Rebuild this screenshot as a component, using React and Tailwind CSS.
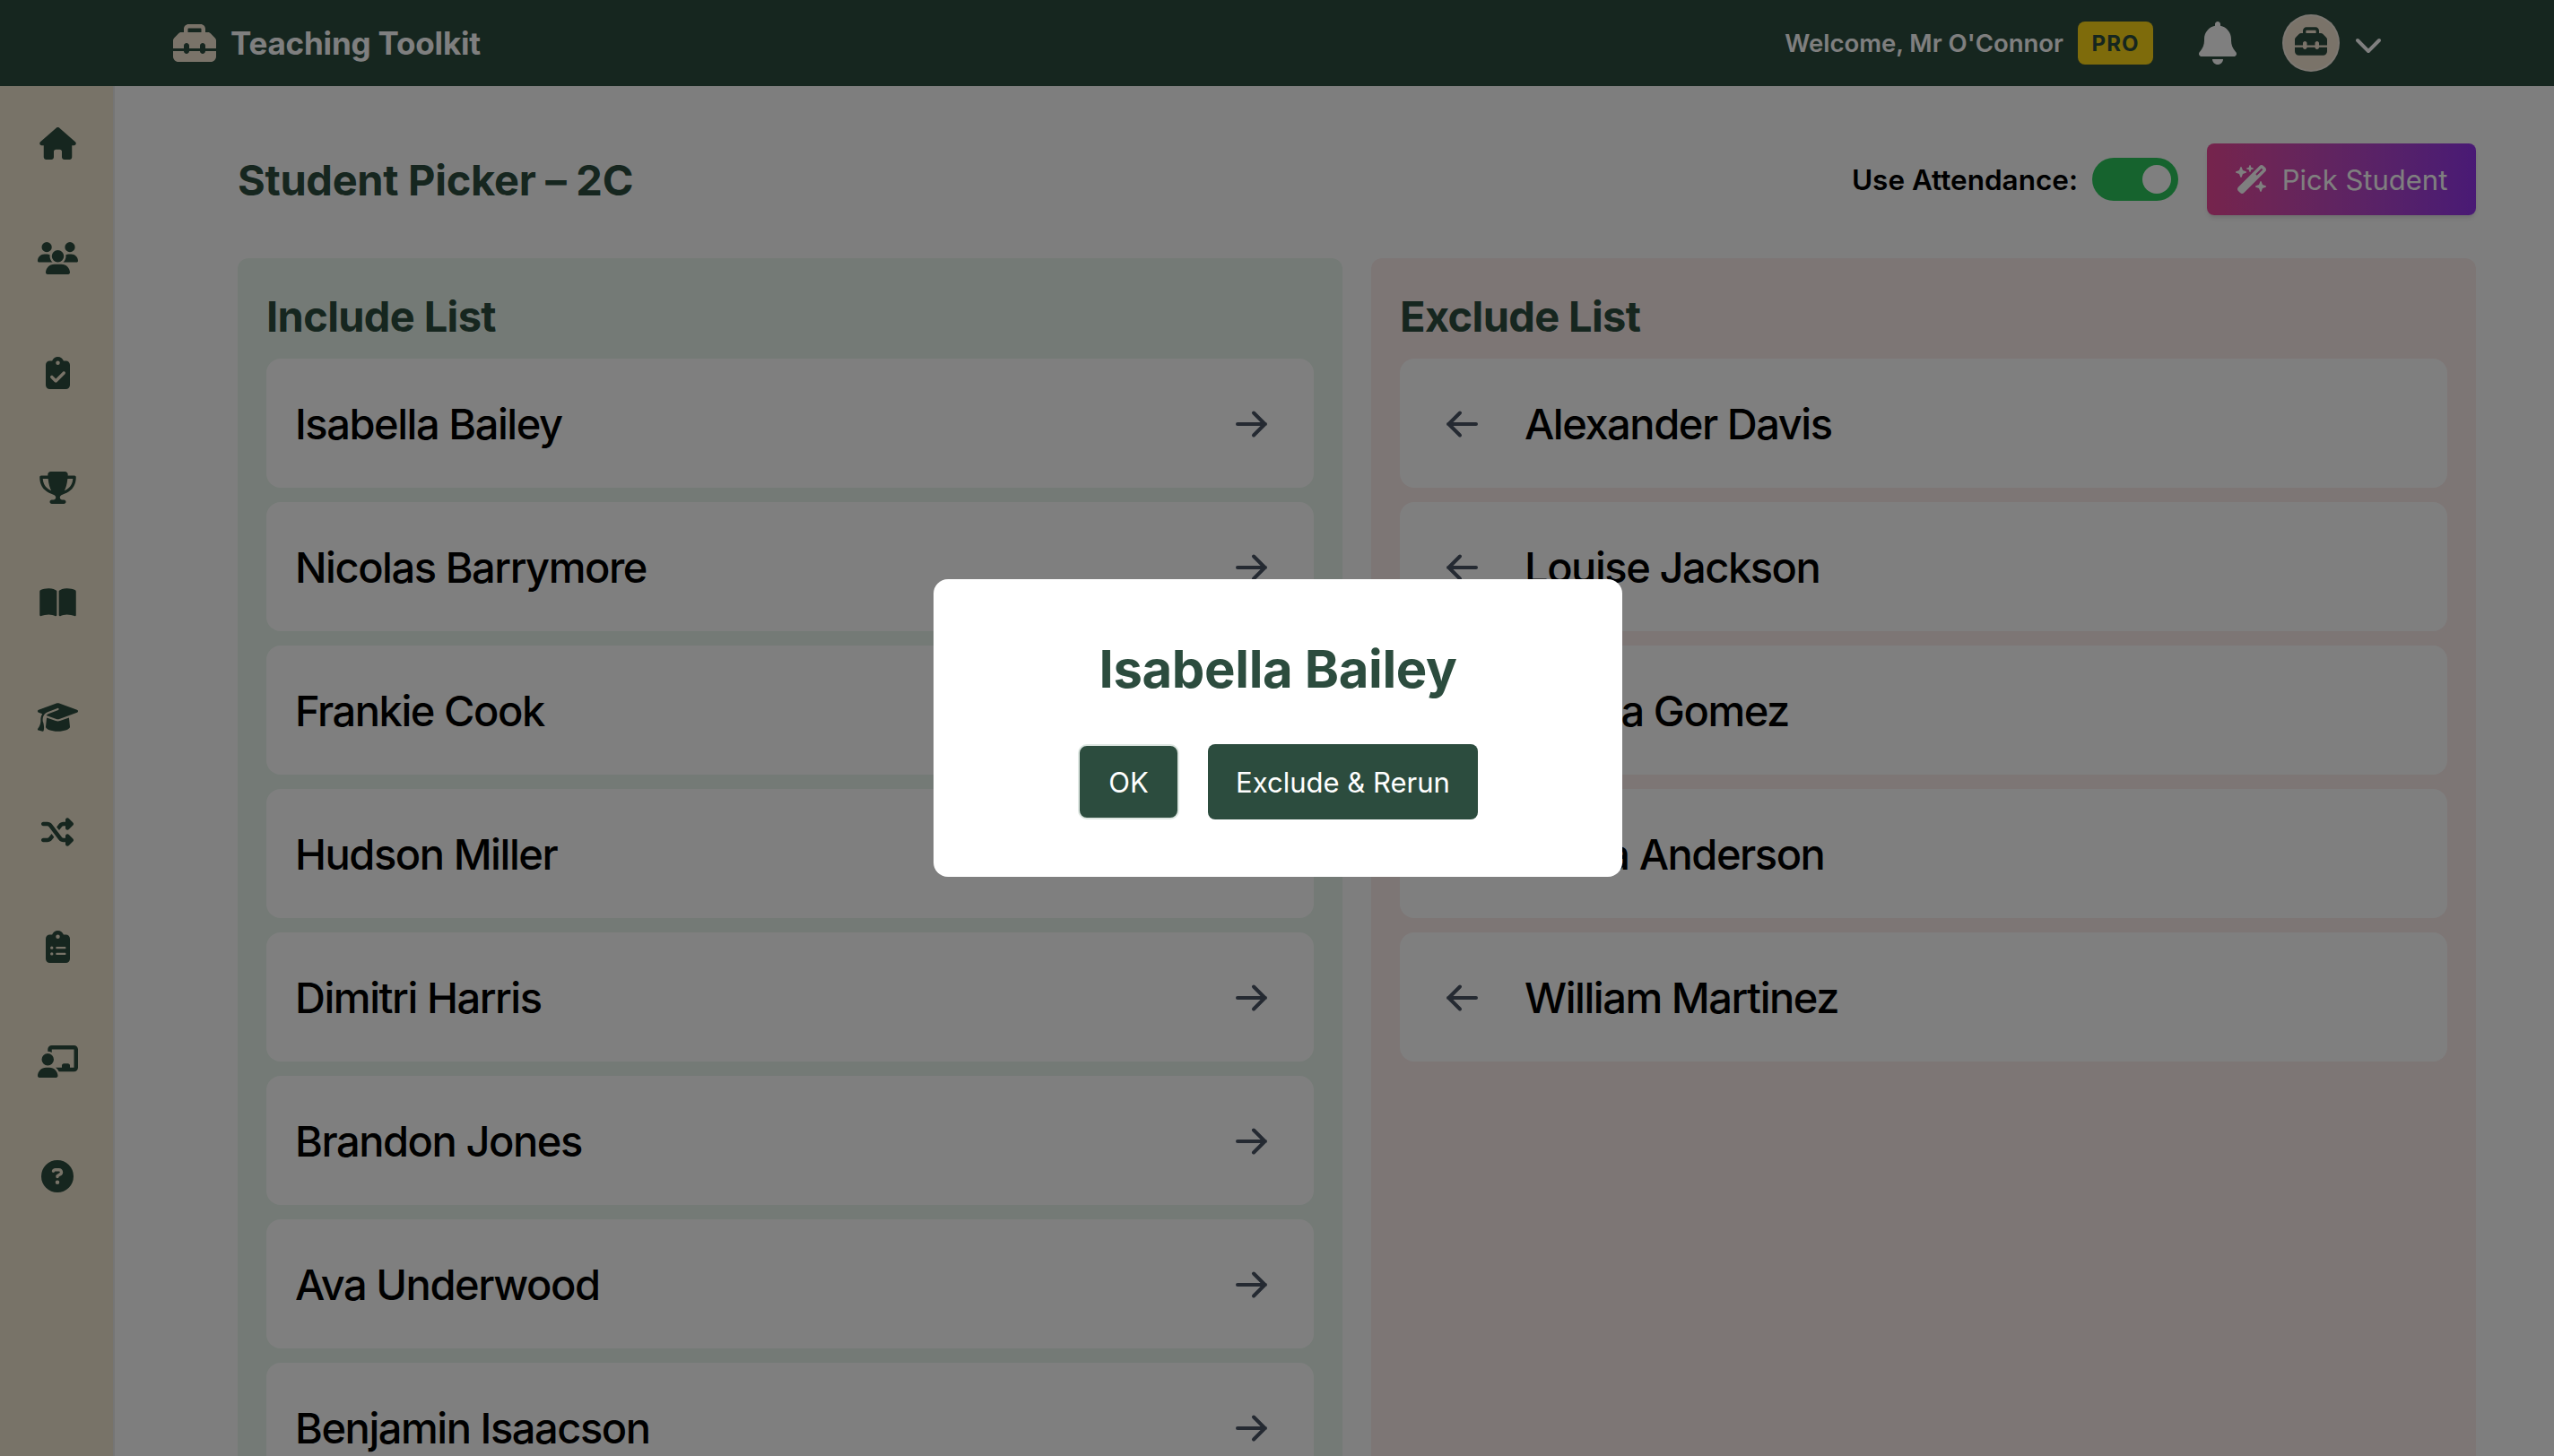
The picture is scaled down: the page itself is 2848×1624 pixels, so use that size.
import { useState } from 'react';
import {
  FaBell,
  FaBookOpen,
  FaChalkboardUser,
  FaChevronDown,
  FaCircleQuestion,
  FaClipboardCheck,
  FaClipboardList,
  FaGraduationCap,
  FaHouse,
  FaShuffle,
  FaToolbox,
  FaTrophy,
  FaUsers,
  FaWandMagicSparkles,
} from 'react-icons/fa6';

// the icons are not square, so each one carries its own width
const NAV_ITEMS = [
  { label: 'Home', icon: FaHouse, width: 'w-[41px]' },
  { label: 'Classes', icon: FaUsers, width: 'w-[45px]' },
  { label: 'Attendance', icon: FaClipboardCheck, width: 'w-[27px]' },
  { label: 'Awards', icon: FaTrophy, width: 'w-[41px]' },
  { label: 'Lessons', icon: FaBookOpen, width: 'w-[41px]' },
  { label: 'Grades', icon: FaGraduationCap, width: 'w-[45px]' },
  { label: 'Student Picker', icon: FaShuffle, width: 'w-9' },
  { label: 'Checklists', icon: FaClipboardList, width: 'w-[27px]' },
  { label: 'Seating', icon: FaChalkboardUser, width: 'w-[45px]' },
  { label: 'Help', icon: FaCircleQuestion, width: 'w-9' },
];

const INCLUDED = [
  'Isabella Bailey',
  'Nicolas Barrymore',
  'Frankie Cook',
  'Hudson Miller',
  'Dimitri Harris',
  'Brandon Jones',
  'Ava Underwood',
  'Benjamin Isaacson',
];

const EXCLUDED = [
  'Alexander Davis',
  'Louise Jackson',
  'Emma Gomez',
  'Olivia Anderson',
  'William Martinez',
];

function Arrow({ className = '' }) {
  return (
    <svg viewBox="0 0 40 40" className={`h-10 w-10 ${className}`} fill="none" stroke="currentColor" strokeWidth="4" strokeLinecap="round" strokeLinejoin="round">
      <path d="M3 21h31M21 8.5 33.5 21 21 33.5" />
    </svg>
  );
}

function Header() {
  return (
    <header className="flex h-24 shrink-0 items-center justify-between bg-[#2c4c3e] pr-[191px] pl-[193px]">
      <div className="flex items-center gap-4">
        <FaToolbox className="h-12 w-12 text-[#f5e6d3]" />
        <span className="text-[35px] leading-none font-bold tracking-[-0.18px] text-white">Teaching Toolkit</span>
      </div>
      <div className="flex items-center">
        <span className="pt-0.5 text-[27.5px] leading-none font-semibold text-white">Welcome, Mr O'Connor</span>
        <span className="ml-4 flex h-12 w-[84px] items-center justify-center rounded-lg bg-[#fdd616] pt-0.5 text-[24px] leading-none font-bold tracking-[1px] text-[#2c4c3e]">
          PRO
        </span>
        <FaBell className="ml-[51px] h-12 w-[42px] text-white" />
        <button className="ml-[51px] flex items-center gap-4">
          <span className="flex h-16 w-16 items-center justify-center rounded-full border-2 border-white/40 bg-[#f5e6d3]">
            <FaToolbox className="mb-1 h-9 w-9 text-[#2c4c3e]" />
          </span>
          <FaChevronDown className="mt-0.5 h-8 w-8 text-white" />
        </button>
      </div>
    </header>
  );
}

function Sidebar() {
  return (
    <nav className="flex w-32 shrink-0 flex-col border-r-2 border-[#eaeaea] bg-[#f1e6d0] pl-0.5">
      {NAV_ITEMS.map(({ label, icon: Icon, width }) => (
        <a key={label} href="#" aria-label={label} className="flex h-32 items-center justify-center text-[#2c4c3e]">
          <Icon className={`h-9 ${width}`} />
        </a>
      ))}
    </nav>
  );
}

function StudentName({ children }) {
  return <span className="text-[47px] leading-none font-medium tracking-[-1.45px] text-black">{children}</span>;
}

export default function App() {
  const [useAttendance, setUseAttendance] = useState(true);
  const [picked, setPicked] = useState('Isabella Bailey');

  return (
    <div className="flex h-screen flex-col overflow-hidden bg-[#fdfdfd] font-[Inter,sans-serif]">
      <Header />

      <div className="flex min-h-0 flex-1">
        <Sidebar />

        <main className="flex min-w-0 flex-1 flex-col pt-16 pr-[87px] pl-[137px]">
          <div className="flex items-center justify-between">
            <h1 className="text-[47px] leading-none font-bold tracking-[-0.3px] text-[#2c4c3e]">Student Picker – 2C</h1>
            <div className="flex items-center">
              <span className="pt-0.5 text-[31.5px] leading-none font-semibold text-black">Use Attendance:</span>
              <button
                onClick={() => setUseAttendance(!useAttendance)}
                className={`ml-4 flex h-12 w-24 items-center rounded-full p-2 ${useAttendance ? 'justify-end bg-[#2dc75d]' : 'justify-start bg-gray-300'}`}
              >
                <span className="h-8 w-8 rounded-full bg-white" />
              </button>
              <button
                onClick={() => setPicked(INCLUDED[0])}
                className="ml-8 flex h-20 w-[300px] items-center justify-center gap-4 rounded-lg bg-linear-to-r from-[#ec4899] to-[#9333ea] text-[31px] leading-none text-white shadow-md"
              >
                <FaWandMagicSparkles className="h-8 w-9" />
                Pick Student
              </button>
            </div>
          </div>

          <div className="mt-12 grid min-h-0 flex-1 grid-cols-2 gap-8">
            <section className="rounded-t-xl bg-[#e8f5ec] p-8">
              <h2 className="mb-[15px] pt-px text-[47px] leading-[64px] font-bold tracking-[-0.65px] text-[#2c4c3e]">Include List</h2>
              <ul className="space-y-4">
                {INCLUDED.map((name) => (
                  <li key={name} className="flex h-36 items-center justify-between rounded-2xl bg-white px-8">
                    <StudentName>{name}</StudentName>
                    <button className="p-4 text-gray-600">
                      <Arrow />
                    </button>
                  </li>
                ))}
              </ul>
            </section>

            <section className="rounded-t-xl bg-[#fbeceb] p-8">
              <h2 className="mb-[15px] pt-px text-[47px] leading-[64px] font-bold tracking-[-0.65px] text-[#2c4c3e]">Exclude List</h2>
              <ul className="space-y-4">
                {EXCLUDED.map((name) => (
                  <li key={name} className="flex h-36 items-center gap-[35px] rounded-2xl bg-white px-8">
                    <button className="p-4 text-gray-600">
                      <Arrow className="-scale-x-100" />
                    </button>
                    <StudentName>{name}</StudentName>
                  </li>
                ))}
              </ul>
            </section>
          </div>
        </main>
      </div>

      {picked && (
        <div className="fixed inset-0 flex items-center justify-center bg-black/50 pl-0.5">
          <div className="flex w-[768px] flex-col items-center rounded-2xl bg-white p-16">
            <h3 className="text-[58px] leading-[72px] font-bold tracking-[-0.35px] text-[#2c4c3e]">{picked}</h3>
            <div className="mt-12 flex gap-8 text-[31px] leading-none text-white">
              <button
                onClick={() => setPicked(null)}
                className="flex h-[84px] w-[113px] items-center justify-center rounded-[10px] border-2 border-[#dde6e1] bg-[#2c4c3e]"
              >
                OK
              </button>
              <button className="flex h-[84px] w-[301px] items-center justify-center rounded-lg bg-[#2c4c3e]">
                Exclude &amp; Rerun
              </button>
            </div>
          </div>
        </div>
      )}
    </div>
  );
}
